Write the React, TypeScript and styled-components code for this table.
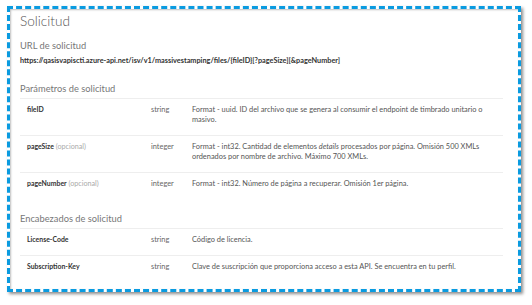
import React from "react";
import styled, { createGlobalStyle } from "styled-components";

const Global = createGlobalStyle`
  html, body { margin: 0; padding: 0; background: #ffffff; }
  body { font-family: Lato, "Open Sans", "Liberation Sans", sans-serif; }
`;

const Page = styled.div`
  width: 532px;
  height: 305px;
  padding: 6px 0 0 7px;
  box-sizing: border-box;
  background: #fff;
`;

const Frame = styled.div`
  width: 514px;
  height: 286px;
  box-sizing: border-box;
  border: 3px dashed #0a9be0;
  background: #fff;
  box-shadow: 2px 2px 3px rgba(0, 0, 0, 0.45), inset 1px 1px 2px rgba(0, 0, 0, 0.25);
  padding: 3px 15px 0 10px;
  display: flex;
  flex-direction: column;
`;

const Title = styled.h1`
  margin: 0;
  font-weight: 300;
  font-size: 13.6px;
  line-height: 19px;
  color: #555;
`;

const SubTitle = styled.h2<{ $top: number }>`
  margin: 0;
  font-weight: 400;
  font-size: 9.3px;
  line-height: 14px;
  color: #777;
  margin-top: ${(p) => p.$top}px;
`;

const Url = styled.div`
  font-size: 7.3px;
  line-height: 11px;
  font-weight: 700;
  color: #333;
  margin-top: 1.5px;
  white-space: nowrap;
`;

const Table = styled.div`
  margin-top: 2px;
  border-top: 1px solid #eeeeee;
  display: flex;
  flex-direction: column;
`;

const Row = styled.div<{ $last?: boolean }>`
  display: grid;
  grid-template-columns: 124px 41px 1fr;
  align-items: baseline;
  padding: 5px 0 ${(p) => (p.$last ? 5 : 10)}px 7px;
  border-bottom: ${(p) => (p.$last ? "none" : "1px solid #eeeeee")};
  font-size: 7.4px;
  line-height: 10px;
  color: #555;
`;

const Name = styled.div`
  font-weight: 700;
  font-size: 6.9px;
  color: #333;
`;

const Optional = styled.span`
  font-weight: 400;
  font-size: 7.2px;
  color: #aaa;
`;

const Type = styled.div`
  color: #666;
`;

const Desc = styled.div`
  color: #555;
  em { font-style: italic; }
`;

type Param = {
  name: string;
  optional?: boolean;
  type: string;
  desc: React.ReactNode;
};

const params: Param[] = [
  {
    name: "fileID",
    type: "string",
    desc: (
      <>
        Format - uuid. ID del archivo que se genera al consumir el endpoint de timbrado unitario o
        <br />
        masivo.
      </>
    ),
  },
  {
    name: "pageSize",
    optional: true,
    type: "integer",
    desc: (
      <>
        Format - int32. Cantidad de elementos <em>details</em> procesados por página. Omisión 500 XMLs
        <br />
        ordenados por nombre de archivo. Máximo 700 XMLs.
      </>
    ),
  },
  {
    name: "pageNumber",
    optional: true,
    type: "integer",
    desc: "Format - int32. Número de página a recuperar. Omisión 1er página.",
  },
];

const headers: Param[] = [
  { name: "License-Code", type: "string", desc: "Código de licencia." },
  {
    name: "Subscription-Key",
    type: "string",
    desc: "Clave de suscripción que proporciona acceso a esta API. Se encuentra en tu perfil.",
  },
];

function ParamRows({ items }: { items: Param[] }) {
  return (
    <Table>
      {items.map((p, i) => (
        <Row key={p.name} $last={i === items.length - 1}>
          <Name>
            {p.name}
            {p.optional && <Optional> (opcional)</Optional>}
          </Name>
          <Type>{p.type}</Type>
          <Desc>{p.desc}</Desc>
        </Row>
      ))}
    </Table>
  );
}

export default function App() {
  return (
    <Page>
      <Global />
      <Frame>
        <Title>Solicitud</Title>
        <SubTitle $top={8}>URL de solicitud</SubTitle>
        <Url>
          https://qasisvapiscti.azure-api.net/isv/v1/massivestamping/files/{"{fileID}"}[?pageSize][&amp;pageNumber]
        </Url>
        <SubTitle $top={16}>Parámetros de solicitud</SubTitle>
        <ParamRows items={params} />
        <SubTitle $top={18}>Encabezados de solicitud</SubTitle>
        <ParamRows items={headers} />
      </Frame>
    </Page>
  );
}
